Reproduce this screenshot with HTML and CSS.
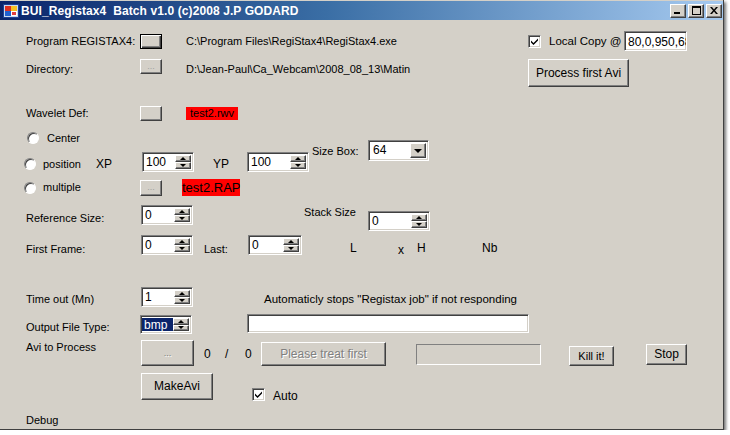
FILE: index.html
```html
<!DOCTYPE html>
<html lang="en">
<head>
    <meta charset="UTF-8">
    <title>BUI_Registax4 Batch</title>
    <link rel="stylesheet" href="styles.css">
</head>
<body>
    <div class="window">
        <div class="titlebar">
            <svg class="app-icon" width="16" height="16" viewBox="0 0 16 16">
                <rect x="0.5" y="1.5" width="15" height="13" fill="#c8d8f0" stroke="#1c3f94"/>
                <rect x="2" y="3" width="6" height="5" fill="#e03020"/>
                <rect x="8" y="3" width="6" height="5" fill="#f8c020"/>
                <rect x="2" y="8" width="6" height="5" fill="#2060d0"/>
                <rect x="8" y="8" width="6" height="5" fill="#ffffff"/>
                <rect x="9" y="9" width="4" height="3" fill="#e04040"/>
            </svg>
            <span class="title">BUI_Registax4&nbsp; Batch v1.0 (c)2008 J.P GODARD</span>
            <div class="caption-buttons">
                <span class="cap-btn">
                    <svg width="8" height="7" viewBox="0 0 8 7"><rect x="0" y="5" width="6" height="2" fill="#000"/></svg>
                </span>
                <span class="cap-btn">
                    <svg width="9" height="9" viewBox="0 0 9 9"><rect x="0.5" y="0.5" width="8" height="8" fill="none" stroke="#000"/><rect x="0" y="0" width="9" height="2" fill="#000"/></svg>
                </span>
                <span class="cap-btn">
                    <svg width="8" height="7" viewBox="0 0 8 7"><path d="M0 0h2l2 2.5 2-2.5h2l-3 3.5 3 3.5h-2l-2-2.5-2 2.5h-2l3-3.5z" fill="#000"/></svg>
                </span>
            </div>
        </div>

        <div class="client">
            <!-- program / directory -->
            <div class="row row-program">
                <span class="label">Program REGISTAX4:</span>
                <span class="btn btn-default btn-browse"></span>
                <span class="path">C:\Program Files\RegiStax4\RegiStax4.exe</span>
                <span class="check checked">
                    <svg width="9" height="9" viewBox="0 0 9 9"><path d="M1 3.5l2.5 2.5 4.5-4.5v2l-4.5 4.5-2.5-2.5z" fill="#000"/></svg>
                </span>
                <span class="local-copy">Local Copy @</span>
                <span class="textbox tb-local">80,0,950,68</span>
            </div>

            <div class="row row-directory">
                <span class="label">Directory:</span>
                <span class="btn btn-browse dim">...</span>
                <span class="path">D:\Jean-Paul\Ca_Webcam\2008_08_13\Matin</span>
                <span class="btn btn-process">Process first Avi</span>
            </div>

            <!-- wavelet and position -->
            <div class="row row-wavelet">
                <span class="label">Wavelet Def:</span>
                <span class="btn btn-browse"></span>
                <span class="red-file rwv">test2.rwv</span>
            </div>

            <div class="row row-center">
                <span class="radio"></span>
                <span class="radio-text">Center</span>
            </div>

            <div class="row row-position">
                <span class="radio"></span>
                <span class="radio-text pos-text">position</span>
                <span class="xp">XP</span>
                <div class="spin w52"><span class="spin-value">100</span><span class="spin-buttons"><span class="spin-up"></span><span class="spin-down"></span></span></div>
                <span class="yp">YP</span>
                <div class="spin w62"><span class="spin-value">100</span><span class="spin-buttons"><span class="spin-up"></span><span class="spin-down"></span></span></div>
                <span class="size-box">Size Box:</span>
                <div class="combo"><span class="combo-value">64</span><span class="combo-button"></span></div>
            </div>

            <div class="row row-multiple">
                <span class="radio"></span>
                <span class="radio-text multi-text">multiple</span>
                <span class="btn btn-browse btn-tall dim">...</span>
                <span class="red-file rap">test2.RAP</span>
            </div>

            <!-- sizes and frames -->
            <div class="row row-refsize">
                <span class="label">Reference Size:</span>
                <div class="spin w52"><span class="spin-value">0</span><span class="spin-buttons"><span class="spin-up"></span><span class="spin-down"></span></span></div>
                <span class="stack-size">Stack Size</span>
                <div class="spin w62"><span class="spin-value">0</span><span class="spin-buttons"><span class="spin-up"></span><span class="spin-down"></span></span></div>
            </div>

            <div class="row row-frames">
                <span class="label">First Frame:</span>
                <div class="spin w52"><span class="spin-value">0</span><span class="spin-buttons"><span class="spin-up"></span><span class="spin-down"></span></span></div>
                <span class="last">Last:</span>
                <div class="spin w54"><span class="spin-value">0</span><span class="spin-buttons"><span class="spin-up"></span><span class="spin-down"></span></span></div>
                <span class="dim-l">L</span>
                <span class="dim-x">x</span>
                <span class="dim-h">H</span>
                <span class="dim-nb">Nb</span>
            </div>

            <!-- job settings -->
            <div class="row row-timeout">
                <span class="label">Time out (Mn)</span>
                <div class="spin w52"><span class="spin-value">1</span><span class="spin-buttons"><span class="spin-up"></span><span class="spin-down"></span></span></div>
                <span class="auto-stop">Automaticly stops "Registax job" if not responding</span>
            </div>

            <div class="row row-output">
                <span class="label">Output File Type:</span>
                <div class="spin w52 selected"><span class="spin-value">bmp</span><span class="spin-buttons"><span class="spin-up"></span><span class="spin-down"></span></span></div>
                <span class="textbox tb-output"></span>
            </div>

            <div class="row row-avi">
                <span class="label">Avi to Process</span>
                <span class="btn btn-avi disabled">...</span>
                <span class="count">0</span>
                <span class="slash">/</span>
                <span class="count-total">0</span>
                <span class="btn btn-treat disabled">Please treat first</span>
                <span class="progress"></span>
                <span class="btn btn-kill">Kill it!</span>
                <span class="btn btn-stop">Stop</span>
            </div>

            <div class="row row-make">
                <span class="label"></span>
                <span class="btn btn-make">MakeAvi</span>
                <span class="check checked check-auto">
                    <svg width="9" height="9" viewBox="0 0 9 9"><path d="M1 3.5l2.5 2.5 4.5-4.5v2l-4.5 4.5-2.5-2.5z" fill="#000"/></svg>
                </span>
                <span class="auto-text">Auto</span>
            </div>

            <div class="row row-debug">
                <span class="label">Debug</span>
            </div>
        </div>
    </div>
</body>
</html>
```

FILE: styles.css
```css
body {
    margin: 0;
    background-color: #fff;
    font-family: "Liberation Sans", Arial, sans-serif;
    font-size: 11px;
    color: #000;
}

.window {
    width: 724px;
    height: 430px;
    background-color: #d4d0c8;
    border-right: 1px solid #404040;
    border-bottom: 1px solid #404040;
    box-shadow: 2px 2px 3px rgba(0, 0, 0, 0.55);
    padding-top: 1px;
    box-sizing: border-box;
    overflow: hidden;
}

/* title bar */
.titlebar {
    height: 19px;
    display: flex;
    align-items: center;
    background: linear-gradient(to right, #0a246a 0%, #3a6ea5 45%, #a6caf0 100%);
}

.app-icon {
    margin-left: 3px;
    margin-right: 2px;
}

.title {
    color: #fff;
    font-weight: bold;
    font-size: 12px;
    letter-spacing: 0.1px;
    white-space: nowrap;
}

.caption-buttons {
    margin-left: auto;
    margin-right: 1px;
    display: flex;
    gap: 2px;
}

.cap-btn {
    width: 16px;
    height: 14px;
    box-sizing: border-box;
    display: flex;
    align-items: center;
    justify-content: center;
    background-color: #d4d0c8;
    border: 1px solid;
    border-color: #fff #404040 #404040 #fff;
    box-shadow: inset -1px -1px #808080;
}

/* client area */
.client {
    padding-top: 11px;
}

.row {
    display: flex;
    align-items: flex-start;
    padding-left: 24px;
    line-height: 13px;
    white-space: nowrap;
}

.label {
    width: 114px;
    padding-left: 2px;
    flex-shrink: 0;
}

/* common controls */
.btn {
    box-sizing: border-box;
    display: flex;
    align-items: center;
    justify-content: center;
    background-color: #d4d0c8;
    border: 1px solid;
    border-color: #fff #404040 #404040 #fff;
    box-shadow: inset -1px -1px #808080;
    flex-shrink: 0;
}

.btn-default {
    border-color: #000;
    box-shadow: inset 1px 1px #fff, inset -1px -1px #404040, inset -2px -2px #808080;
}

.btn-browse {
    width: 22px;
    height: 15px;
    font-size: 9px;
}

.dim {
    color: #a0a0a0;
}

.disabled {
    color: #808080;
    text-shadow: 1px 1px #fff;
}

.textbox {
    box-sizing: border-box;
    background-color: #fff;
    border: 1px solid;
    border-color: #808080 #fff #fff #808080;
    box-shadow: inset 1px 1px #404040, inset -1px -1px #d4d0c8;
    overflow: hidden;
    flex-shrink: 0;
}

.check {
    box-sizing: border-box;
    width: 13px;
    height: 13px;
    display: flex;
    align-items: center;
    justify-content: center;
    background-color: #fff;
    border: 1px solid;
    border-color: #808080 #fff #fff #808080;
    box-shadow: inset 1px 1px #404040, inset -1px -1px #d4d0c8;
    flex-shrink: 0;
}

.radio {
    box-sizing: border-box;
    width: 12px;
    height: 12px;
    border-radius: 50%;
    background-color: #fff;
    border: 1px solid;
    border-color: #808080 #fff #fff #808080;
    box-shadow: inset 1px 1px #404040;
    flex-shrink: 0;
}

.spin {
    box-sizing: border-box;
    height: 20px;
    display: flex;
    border: 1px solid;
    border-color: #808080 #fff #fff #808080;
    box-shadow: inset 1px 1px #404040, inset -1px -1px #d4d0c8;
    padding: 2px 2px 2px 1px;
    background-color: #fff;
    flex-shrink: 0;
}

.spin-value {
    flex: 1;
    padding-left: 2px;
    line-height: 14px;
    font-size: 12px;
}

.spin.selected .spin-value {
    background-color: #0a246a;
    color: #fff;
}

.spin-buttons {
    width: 16px;
    display: flex;
    flex-direction: column;
}

.spin-up,
.spin-down {
    flex: 1;
    box-sizing: border-box;
    display: flex;
    align-items: center;
    justify-content: center;
    background-color: #d4d0c8;
    border: 1px solid;
    border-color: #fff #404040 #404040 #fff;
    box-shadow: inset -1px -1px #808080;
}

.spin-up::after {
    content: "";
    border-left: 3px solid transparent;
    border-right: 3px solid transparent;
    border-bottom: 3px solid #000;
}

.spin-down::after {
    content: "";
    border-left: 3px solid transparent;
    border-right: 3px solid transparent;
    border-top: 3px solid #000;
}

.w52 { width: 52px; }
.w54 { width: 54px; }
.w62 { width: 62px; }

.combo {
    box-sizing: border-box;
    width: 61px;
    height: 21px;
    display: flex;
    align-self: flex-start;
    border: 1px solid;
    border-color: #808080 #fff #fff #808080;
    box-shadow: inset 1px 1px #404040, inset -1px -1px #d4d0c8;
    padding: 2px;
    background-color: #fff;
    flex-shrink: 0;
}

.combo-value {
    flex: 1;
    padding-left: 2px;
    line-height: 15px;
    font-size: 12px;
}

.combo-button {
    width: 16px;
    box-sizing: border-box;
    display: flex;
    align-items: center;
    justify-content: center;
    background-color: #d4d0c8;
    border: 1px solid;
    border-color: #fff #404040 #404040 #fff;
    box-shadow: inset -1px -1px #808080;
}

.combo-button::after {
    content: "";
    border-left: 4px solid transparent;
    border-right: 4px solid transparent;
    border-top: 4px solid #000;
}

.red-file {
    background-color: #ff0000;
    color: #000;
    text-align: center;
    flex-shrink: 0;
}

/* row: program */
.row-program {
    height: 20px;
    align-items: center;
}

.path {
    width: 342px;
    margin-left: 24px;
    flex-shrink: 0;
}

.local-copy {
    width: 75px;
    margin-left: 8px;
    font-size: 11.5px;
}

.tb-local {
    width: 63px;
    height: 20px;
    padding: 3px 0 0 3px;
    font-size: 12px;
    line-height: 14px;
}

/* row: directory */
.row-directory {
    height: 45px;
    margin-top: 8px;
}

.row-directory .label,
.row-directory .path {
    margin-top: 4px;
}

.btn-process {
    width: 101px;
    height: 28px;
    font-size: 12px;
}

/* row: wavelet */
.row-wavelet {
    height: 14px;
    align-items: center;
    margin-top: 2px;
}

.rwv {
    width: 52px;
    height: 13px;
    margin-left: 24px;
    line-height: 13px;
}

/* radios */
.row-center {
    height: 9px;
    margin-top: 11px;
}

.row-center .radio {
    margin-left: 3px;
    margin-top: 1px;
}

.radio-text {
    margin-left: 8px;
    margin-top: 1px;
}

.row-position {
    height: 32px;
    align-items: flex-end;
}

.row-position .radio {
    margin-bottom: 2px;
}

.pos-text {
    width: 53px;
    margin-left: 7px;
    margin-bottom: 1px;
}

.xp {
    width: 46px;
    font-size: 12px;
    margin-bottom: 1px;
}

.yp {
    width: 34px;
    margin-left: 19px;
    font-size: 12px;
    margin-bottom: 1px;
}

.size-box {
    width: 56px;
    margin-left: 3px;
    align-self: flex-start;
    margin-top: 5px;
}

.row-multiple {
    height: 17px;
    align-items: center;
    margin-top: 7px;
}

.multi-text {
    width: 97px;
    margin-left: 7px;
    margin-top: 0;
}

.btn-tall {
    height: 16px;
}

.rap {
    width: 58px;
    height: 17px;
    margin-left: 20px;
    font-size: 13px;
    line-height: 17px;
}

/* row: reference size */
.row-refsize {
    height: 31px;
    margin-top: 8px;
}

.row-refsize .label {
    margin-top: 8px;
}

.row-refsize .spin {
    margin-left: 1px;
    margin-top: 1px;
}

.stack-size {
    width: 63px;
    margin-left: 111px;
    margin-top: 2px;
}

.row-refsize .w62 {
    margin-top: 7px;
}

/* row: frames */
.row-frames {
    height: 52px;
}

.row-frames .label,
.last {
    margin-top: 8px;
}

.row-frames .w52 {
    margin-left: 1px;
}

.last {
    width: 44px;
    margin-left: 11px;
}

.dim-l,
.dim-x,
.dim-h,
.dim-nb {
    margin-top: 7px;
    font-size: 12px;
}

.dim-l { width: 48px; margin-left: 48px; }
.dim-x { width: 19px; margin-top: 9px; }
.dim-h { width: 65px; }

/* row: timeout */
.row-timeout {
    height: 26px;
}

.row-timeout .label,
.auto-stop {
    margin-top: 6px;
}

.row-timeout .spin {
    margin-left: 1px;
}

.auto-stop {
    margin-left: 71px;
    font-size: 11.5px;
}

/* row: output */
.row-output {
    height: 27px;
}

.row-output .label {
    margin-top: 8px;
}

.row-output .spin {
    height: 19px;
    margin-top: 2px;
}

.tb-output {
    width: 282px;
    height: 19px;
    margin-left: 55px;
    margin-top: 1px;
}

/* row: avi */
.row-avi {
    height: 33px;
}

.row-avi .label {
    margin-top: 1px;
}

.btn-avi {
    width: 53px;
    height: 26px;
    margin-left: 1px;
    font-size: 9px;
}

.count,
.slash,
.count-total {
    margin-top: 8px;
    font-size: 12px;
}

.count { width: 11px; margin-left: 10px; }
.slash { width: 20px; margin-left: 10px; }
.count-total { width: 16px; }

.btn-treat {
    width: 125px;
    height: 24px;
    margin-top: 2px;
    font-size: 12px;
}

.progress {
    box-sizing: border-box;
    width: 125px;
    height: 21px;
    margin-left: 30px;
    margin-top: 4px;
    border: 1px solid;
    border-color: #808080 #fff #fff #808080;
}

.btn-kill {
    width: 45px;
    height: 20px;
    margin-left: 28px;
    margin-top: 6px;
}

.btn-stop {
    width: 41px;
    height: 21px;
    margin-left: 32px;
    margin-top: 4px;
    font-size: 12px;
}

/* row: make avi */
.row-make {
    height: 29px;
}

.btn-make {
    width: 72px;
    height: 27px;
    margin-left: 1px;
    font-size: 12px;
}

.check-auto {
    margin-left: 39px;
    margin-top: 15px;
}

.auto-text {
    margin-left: 8px;
    margin-top: 17px;
    font-size: 12px;
}

/* row: debug */
.row-debug {
    margin-top: 12px;
}
```
